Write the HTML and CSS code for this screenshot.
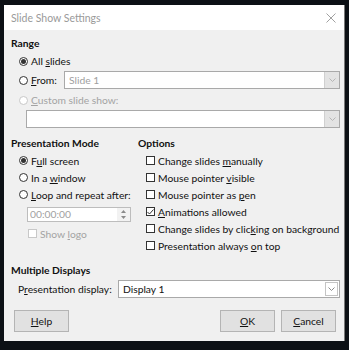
FILE: index.html
```html
<!DOCTYPE html>
<html lang="en">
<head>
    <meta charset="UTF-8">
    <title>Slide Show Settings</title>
    <link rel="stylesheet" href="styles.css">
</head>
<body>
    <div class="dialog">
        <div class="titlebar">
            <span class="title">Slide Show Settings</span>
            <svg class="close" width="10" height="10" viewBox="0 0 10 10"><path d="M0.5 0.5L9.5 9.5M9.5 0.5L0.5 9.5" stroke="#a0a0a0" stroke-width="1"/></svg>
        </div>
        <div class="content">
            <div class="heading">Range</div>
            <div class="row indent"><span class="radio checked"></span><span>All <u>s</u>lides</span></div>
            <div class="row from-row">
                <div class="from-label"><span class="radio"></span><span><u>F</u>rom:</span></div>
                <div class="combo disabled">
                    <span class="combo-text">Slide 1</span>
                    <span class="drop"><svg width="7" height="4" viewBox="0 0 7 4"><path d="M0.5 0.5L3.5 3.5L6.5 0.5" fill="none" stroke="#b5b5b5"/></svg></span>
                </div>
            </div>
            <div class="row indent custom disabled-text"><span class="radio off"></span><span><u>C</u>ustom slide show:</span></div>
            <div class="combo disabled custom-box">
                <span class="combo-text"></span>
                <span class="drop"><svg width="7" height="4" viewBox="0 0 7 4"><path d="M0.5 0.5L3.5 3.5L6.5 0.5" fill="none" stroke="#b5b5b5"/></svg></span>
            </div>

            <div class="columns">
                <div class="col-left">
                    <div class="heading">Presentation Mode</div>
                    <div class="row sm indent"><span class="radio checked"></span><span>F<u>u</u>ll screen</span></div>
                    <div class="row sm indent"><span class="radio"></span><span>In a <u>w</u>indow</span></div>
                    <div class="row sm indent"><span class="radio"></span><span><u>L</u>oop and repeat after:</span></div>
                    <div class="time-field">
                        <span class="time-text">00:00:00</span>
                        <span class="spin">
                            <svg width="5" height="3" viewBox="0 0 5 3"><path d="M0 3L2.5 0L5 3Z" fill="#8a8a8a"/></svg>
                            <svg width="5" height="3" viewBox="0 0 5 3"><path d="M0 0L2.5 3L5 0Z" fill="#8a8a8a"/></svg>
                        </span>
                    </div>
                    <div class="row sm show-logo disabled-text"><span class="check off"></span><span>Show <u>l</u>ogo</span></div>
                </div>
                <div class="col-right">
                    <div class="heading">Options</div>
                    <div class="row sm indent"><span class="check"></span><span>Change slides <u>m</u>anually</span></div>
                    <div class="row sm indent"><span class="check"></span><span>Mouse pointer <u>v</u>isible</span></div>
                    <div class="row sm indent"><span class="check"></span><span>Mouse pointer as <u>p</u>en</span></div>
                    <div class="row sm indent"><span class="check"><svg width="7" height="6" viewBox="0 0 7 6"><path d="M0.5 3L2.5 5L6.5 0.5" fill="none" stroke="#333" stroke-width="1"/></svg></span><span><u>A</u>nimations allowed</span></div>
                    <div class="row sm indent"><span class="check"></span><span>Change slides by clic<u>k</u>ing on background</span></div>
                    <div class="row sm indent"><span class="check"></span><span>Presentation always <u>o</u>n top</span></div>
                </div>
            </div>

            <div class="heading displays">Multiple Displays</div>
            <div class="row display-row">
                <span class="display-label">P<u>r</u>esentation display:</span>
                <div class="combo">
                    <span class="combo-text">Display 1</span>
                    <span class="drop boxed"><svg width="7" height="4" viewBox="0 0 7 4"><path d="M0.5 0.5L3.5 3.5L6.5 0.5" fill="none" stroke="#8a8a8a"/></svg></span>
                </div>
            </div>

            <div class="buttons">
                <button class="btn"><u>H</u>elp</button>
                <span class="spacer"></span>
                <button class="btn"><u>O</u>K</button>
                <button class="btn"><u>C</u>ancel</button>
            </div>
        </div>
    </div>
</body>
</html>
```

FILE: styles.css
```css
body {
    margin: 0;
    background-color: #0c1015;
    font-family: Lato, "Open Sans", sans-serif;
    font-size: 10.3px;
    color: #111;
}
.dialog {
    margin: 5px 0 0 4px;
    width: 341px;
    height: 336px;
    background: #f0f0f0;
    border-right: 1px solid #7a7a7a;
    box-sizing: border-box;
}
.titlebar {
    height: 25px;
    background: white;
    display: flex;
    align-items: center;
    justify-content: space-between;
    padding: 0 8px 0 7px;
}
.title {
    color: #9a9a9a;
    font-size: 10.5px;
}
.content {
    padding: 0 4px 0 7px;
}
u {
    text-decoration-thickness: 1px;
    text-underline-offset: 1px;
}
.heading {
    font-weight: bold;
    height: 18px;
    line-height: 18px;
    margin-top: 4px;
}
.row {
    display: flex;
    align-items: center;
    height: 18px;
    white-space: nowrap;
}
.row.sm {
    height: 17px;
}
.indent {
    padding-left: 8px;
}
.disabled-text {
    color: #a3a3a3;
}
.radio {
    width: 9px;
    height: 9px;
    border: 1px solid #333;
    border-radius: 50%;
    background: white;
    box-sizing: border-box;
    margin-right: 3px;
    position: relative;
    flex: none;
}
.radio.checked::after {
    content: "";
    position: absolute;
    left: 1px;
    top: 1px;
    width: 5px;
    height: 5px;
    border-radius: 50%;
    background: #333;
}
.radio.off {
    border-color: #c8c8c8;
}
.check {
    width: 9px;
    height: 9px;
    border: 1px solid #333;
    background: white;
    box-sizing: border-box;
    margin-right: 3px;
    display: flex;
    align-items: center;
    justify-content: center;
    flex: none;
}
.check.off {
    border-color: #c8c8c8;
}
.from-row {
    margin-top: 1px;
}
.from-label {
    display: flex;
    align-items: center;
    width: 45px;
    padding-left: 8px;
}
.combo {
    flex: 1;
    height: 18px;
    display: flex;
    align-items: stretch;
    background: white;
    border: 1px solid #a9a9a9;
    box-sizing: border-box;
}
.combo-text {
    flex: 1;
    padding-left: 4px;
    line-height: 16px;
}
.combo.disabled .combo-text {
    color: #a0a0a0;
}
.drop {
    width: 14px;
    display: flex;
    align-items: center;
    justify-content: center;
}
.combo.disabled .drop {
    background: #e3e3e3;
    border-left: 1px solid #d0d0d0;
}
.drop.boxed {
    margin: 1px;
    border: 1px solid #c4c4c4;
    width: 11px;
}
.custom {
    margin-top: 2px;
}
.custom-box {
    margin: 1px 0 0 15px;
}
.columns {
    display: grid;
    grid-template-columns: 127px 1fr;
    margin-top: 6px;
}
.columns .heading {
    margin-top: 0;
}
.time-field {
    margin: 4px 0 0 16px;
    width: 104px;
    height: 15px;
    background: white;
    border: 1px solid #bdbdbd;
    box-sizing: border-box;
    display: flex;
}
.time-text {
    flex: 1;
    color: #a0a0a0;
    padding-left: 2px;
    line-height: 13px;
}
.spin {
    width: 13px;
    background: #f2f2f2;
    display: flex;
    flex-direction: column;
    align-items: center;
    justify-content: space-evenly;
}
.show-logo {
    margin-top: 3px;
    padding-left: 17px;
}
.displays {
    margin-top: 7px;
}
.display-row {
    margin-top: 1px;
}
.display-label {
    padding-left: 7px;
    width: 100px;
    flex: none;
}
.buttons {
    display: flex;
    gap: 6px;
    margin-top: 12px;
    padding: 0 4px 0 3px;
}
.spacer {
    flex: 1;
}
.btn {
    width: 55px;
    height: 22px;
    background: #e1e1e1;
    border: 1px solid #b4b4b4;
    font-family: inherit;
    font-size: 10.3px;
    color: #111;
    padding: 0;
}
```
